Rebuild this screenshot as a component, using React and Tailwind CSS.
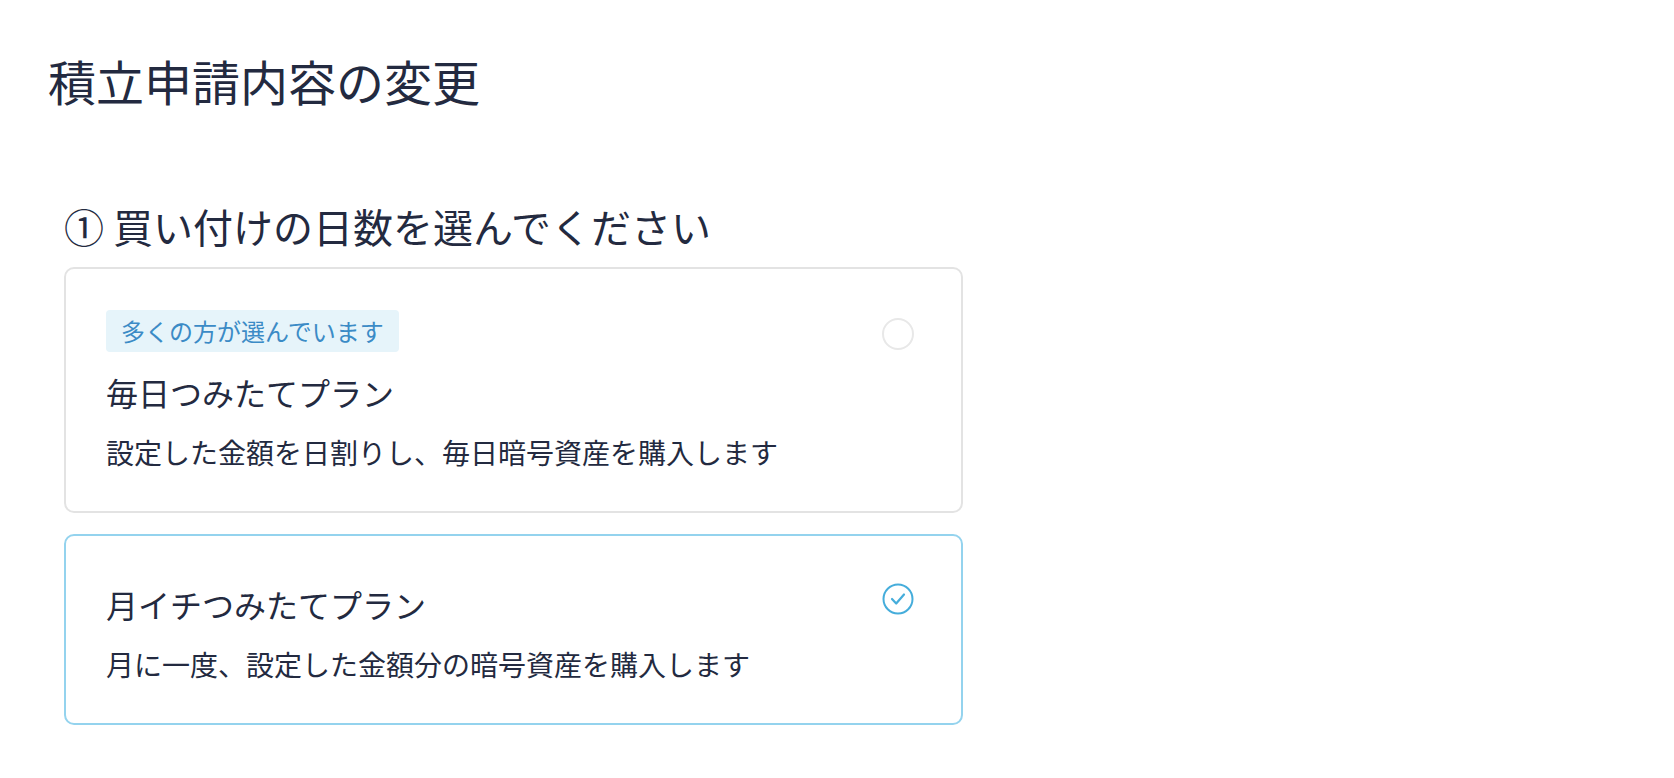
export default function App() {
  return (
    <div
      className="min-h-screen bg-white pt-[44px] pl-[48px] text-[#232a40]"
      style={{ fontFamily: '"Noto Sans CJK JP", "Noto Sans", sans-serif' }}
    >
      <h1 className="text-[48px] leading-[72px] font-normal">積立申請内容の変更</h1>
      <div className="ml-[16px] mt-[80px] w-[899px]">
        <h2 className="text-[40px] leading-[60px] font-normal">① 買い付けの日数を選んでください</h2>
        <div className="mt-[11px] flex flex-col gap-[21px]">
          <div className="flex items-start justify-between rounded-[10px] border-2 border-[#e3e3e3] pl-[40px] pr-[47px] pt-[41px] pb-[38px]">
            <div className="flex flex-col">
              <span className="self-start rounded-[4px] bg-[#e6f4fa] px-[15px] text-[24px] leading-[42px] text-[#3b8bc6]">
                多くの方が選んでいます
              </span>
              <div className="mt-[16px] text-[32px] leading-[48px]">毎日つみたてプラン</div>
              <div className="mt-[15px] text-[28px] leading-[42px]">設定した金額を日割りし、毎日暗号資産を購入します</div>
            </div>
            <div className="mt-[8px] h-[32px] w-[32px] rounded-full border-2 border-[#e8e8e8]" />
          </div>
          <div className="flex items-start justify-between rounded-[10px] border-2 border-[#94d3ee] pl-[40px] pr-[47px] pt-[44px] pb-[38px]">
            <div className="flex flex-col">
              <div className="text-[32px] leading-[48px]">月イチつみたてプラン</div>
              <div className="mt-[15px] text-[28px] leading-[42px]">月に一度、設定した金額分の暗号資産を購入します</div>
            </div>
            <svg className="mt-[3px]" width="32" height="32" viewBox="0 0 32 32" fill="none">
              <circle cx="16" cy="16" r="14.5" stroke="#45addb" strokeWidth="2" />
              <path d="M10 16 L14.2 20.5 L22 11.5" stroke="#45addb" strokeWidth="2.2" strokeLinecap="round" strokeLinejoin="round" />
            </svg>
          </div>
        </div>
      </div>
    </div>
  );
}
